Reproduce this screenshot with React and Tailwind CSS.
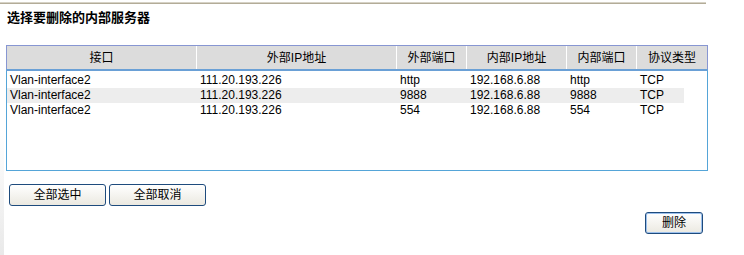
import React from "react";

const cols = ["w-[190px]", "w-[200px]", "w-[70px]", "w-[100px]", "w-[70px]", "w-[70px]"];
const bodyCols = ["w-[190px]", "w-[200px]", "w-[70px]", "w-[100px]", "w-[70px]", "w-[47px]"];

const headers = ["接口", "外部IP地址", "外部端口", "内部IP地址", "内部端口", "协议类型"];

const rows = [
  ["Vlan-interface2", "111.20.193.226", "http", "192.168.6.88", "http", "TCP"],
  ["Vlan-interface2", "111.20.193.226", "9888", "192.168.6.88", "9888", "TCP"],
  ["Vlan-interface2", "111.20.193.226", "554", "192.168.6.88", "554", "TCP"],
];

const btn =
  "h-[22px] rounded-[3px] border border-[#1e4b7d] bg-gradient-to-b from-white to-[#ebe9e1] text-[12px] text-black leading-none";

export default function App() {
  return (
    <div className="w-[744px] h-[255px] bg-white text-[12px] text-black font-['Liberation_Sans','Noto_Sans_CJK_SC',sans-serif] overflow-hidden">
      <div className="mt-[2px] w-[706px] border-t border-b border-t-[#d6d2c6] border-b-[#b3ac98]" />
      <div className="flex h-[251px]">
        <div className="w-[4px] bg-gradient-to-b from-white via-white to-[#e9e9e9]" />
        <div className="flex-1 flex flex-col">
          <h1 className="ml-[3px] mt-[6px] h-[16px] text-[13px] font-bold leading-[16px]">选择要删除的内部服务器</h1>

          <div className="ml-[2px] mt-[19px] w-[702px]">
            <div className="flex h-[24px] border-t border-l border-r border-[#8796d2] bg-[#dcdcdc]">
              {headers.map((h, i) => (
                <div
                  key={h}
                  className={`${cols[i]} flex items-center justify-center leading-none ${i < 5 ? "border-r border-white" : ""}`}
                >
                  {h}
                </div>
              ))}
            </div>
            <div className="h-[2px] bg-[#6aa0d6]" />
            <div className="h-[100px] border-l border-r border-b border-[#55a5d8] pt-[2px]">
              {rows.map((r, ri) => (
                <div key={ri} className={`flex h-[15px] w-[677px] ${ri === 1 ? "bg-[#ededed]" : ""}`}>
                  {r.map((c, ci) => (
                    <div key={ci} className={`${bodyCols[ci]} pl-[3px] leading-[15px] whitespace-nowrap`}>
                      {c}
                    </div>
                  ))}
                </div>
              ))}
            </div>
          </div>

          <div className="ml-[5px] mt-[13px] flex gap-[3px]">
            <button className={`${btn} w-[97px]`}>全部选中</button>
            <button className={`${btn} w-[97px]`}>全部取消</button>
          </div>

          <div className="mt-[6px] ml-[641px]">
            <button className={`${btn} w-[58px] border-[#1b4c8c] shadow-[inset_0_0_0_1px_#9cc0ec]`}>删除</button>
          </div>
        </div>
      </div>
    </div>
  );
}
